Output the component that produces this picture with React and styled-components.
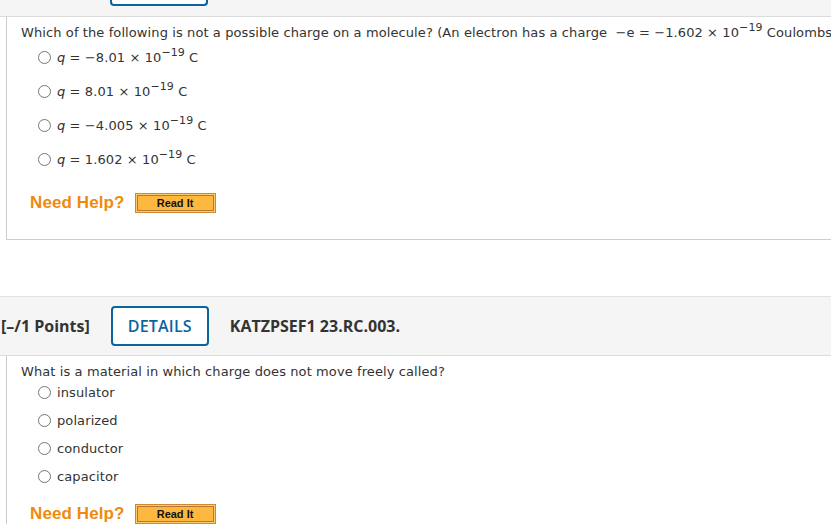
import React from 'react'
import styled, { createGlobalStyle } from 'styled-components'

const GlobalStyle = createGlobalStyle`
    html, body {
        margin: 0;
        padding: 0;
        background: #fff;
        overflow: hidden;
    }
`

const Page = styled.div`
    width: 900px;
    font-family: "DejaVu Sans", Verdana, sans-serif;
`

const Header = styled.div`
    display: flex;
    align-items: center;
    height: 40px;
    padding: 9px 0;
    background: #f5f5f5;
    border-top: 1px solid #e2e2e2;
    border-bottom: 1px solid #dcdcdc;
    font-family: "Open Sans", sans-serif;
`

/* bottom of the previous question's header, scrolled mostly out of view */
const HeaderTail = styled.div`
    height: 16px;
    background: #f5f5f5;
    border-bottom: 1px solid #dcdcdc;
`

const DetailsTail = styled.div`
    margin-left: 110px;
    width: 98px;
    height: 6px;
    box-sizing: border-box;
    border: 2px solid #0b649e;
    border-top: none;
    border-radius: 0 0 4px 4px;
    background: #fff;
`

const Points = styled.span`
    font-size: 16px;
    font-weight: 700;
    color: #333;
    padding-left: 1px;
`

const DetailsButton = styled.button`
    margin: 0 21px;
    width: 98px;
    height: 40px;
    box-sizing: border-box;
    border: 2px solid #0b649e;
    border-radius: 4px;
    background: #fff;
    color: #0b649e;
    font-family: "Open Sans", sans-serif;
    font-size: 16px;
    font-weight: 600;
    letter-spacing: 0.2px;
`

const Code = styled.span`
    font-size: 16px;
    font-weight: 700;
    color: #333;
`

const Panel = styled.div`
    margin-left: 6px;
    border-left: 1px solid #cdcdcd;
    border-bottom: ${(p) => (p.$open ? 'none' : '1px solid #cdcdcd')};
    padding: 8px 0 ${(p) => (p.$open ? 0 : 26)}px 14px;
    margin-bottom: 56px;
    color: #333;
    font-size: 13px;
    letter-spacing: 0.1px;
`

const Question = styled.div`
    line-height: 16px;
    white-space: nowrap;
`

const Options = styled.div`
    display: flex;
    flex-direction: column;
    gap: ${(p) => p.$gap}px;
    margin-top: ${(p) => p.$top}px;
    padding-left: 17px;
`

const Option = styled.label`
    display: flex;
    align-items: center;
    height: 16px;
    gap: 6px;
    white-space: nowrap;
`

const Radio = styled.input.attrs({ type: 'radio' })`
    margin: 0;
    width: 13px;
    height: 13px;
`

const Var = styled.i`
    font-style: italic;
`

const Sup = styled.sup`
    font-size: 11px;
    line-height: 0;
    vertical-align: 6px;
`

const HelpRow = styled.div`
    display: flex;
    align-items: center;
    gap: 10px;
    margin-top: ${(p) => p.$top}px;
    padding-left: 9px;
`

const NeedHelp = styled.span`
    font-family: "Liberation Sans", Arial, sans-serif;
    font-size: 17px;
    font-weight: 700;
    color: #f08a0c;
`

const ReadIt = styled.button`
    width: 81px;
    height: 20px;
    box-sizing: border-box;
    padding: 0;
    border: 1px solid #d4862a;
    background: #ffb83f;
    box-shadow: inset 0 0 0 1px #ffcb70, inset 0 0 0 2px #b07a34;
    font-family: "Liberation Sans", Arial, sans-serif;
    font-size: 11px;
    font-weight: 700;
    color: #111;
`

const Charge = ({ value }) => (
    <span>
        <Var>q</Var> = {value} × 10<Sup>−19</Sup> C
    </span>
)

const Help = ({ top }) => (
    <HelpRow $top={top}>
        <NeedHelp>Need Help?</NeedHelp>
        <ReadIt>Read It</ReadIt>
    </HelpRow>
)

const App = () => {
    const charges = ['−8.01', '8.01', '−4.005', '1.602']
    const materials = ['insulator', 'polarized', 'conductor', 'capacitor']

    return (
        <>
            <GlobalStyle />
            <Page>
                <HeaderTail>
                    <DetailsTail />
                </HeaderTail>
                <Panel>
                    <Question>
                        Which of the following is not a possible charge on a molecule? (An electron has a charge&nbsp; −e = −1.602 × 10<Sup>−19</Sup> Coulombs.)
                    </Question>
                    <Options $gap={18} $top={8}>
                        {charges.map((c) => (
                            <Option key={c}>
                                <Radio name="q1" />
                                <Charge value={c} />
                            </Option>
                        ))}
                    </Options>
                    <Help top={26} />
                </Panel>

                <Header>
                    <Points>[–/1 Points]</Points>
                    <DetailsButton>DETAILS</DetailsButton>
                    <Code>KATZPSEF1 23.RC.003.</Code>
                </Header>
                <Panel $open>
                    <Question>What is a material in which charge does not move freely called?</Question>
                    <Options $gap={12} $top={4}>
                        {materials.map((m) => (
                            <Option key={m}>
                                <Radio name="q2" />
                                <span>{m}</span>
                            </Option>
                        ))}
                    </Options>
                    <Help top={20} />
                </Panel>
            </Page>
        </>
    )
}

export default App
